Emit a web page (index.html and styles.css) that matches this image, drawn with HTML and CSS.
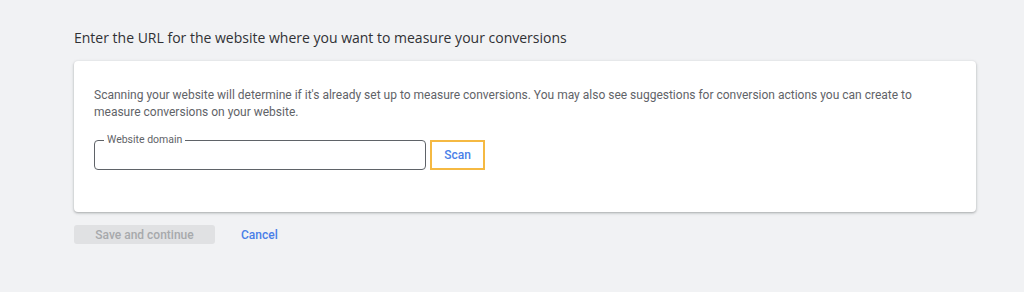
FILE: index.html
```html
<!DOCTYPE html>
<html>
<head>
    <title>Conversions</title>
    <link rel="stylesheet" href="styles.css">
</head>
<body>
    <div class="page">
        <h2 class="page-title">Enter the URL for the website where you want to measure your conversions</h2>

        <div class="scan-card">
            <p class="scan-text">
                Scanning your website will determine if it's already set up to measure conversions. You may also see suggestions for conversion actions you can create to measure conversions on your website.
            </p>
            <div class="scan-row">
                <div class="domain-field">
                    <span class="domain-label">Website domain</span>
                    <input class="domain-input" type="text">
                </div>
                <button class="scan-button">Scan</button>
            </div>
        </div>

        <div class="page-actions">
            <button class="save-button" disabled>Save and continue</button>
            <button class="cancel-button">Cancel</button>
        </div>
    </div>
</body>
</html>
```

FILE: styles.css
```css
:root {
    --page-background: #f1f2f4;
    --text-color: #3c4043;
    --muted-text: #5f6368;
    --link-color: #4a7fe8;
    --focus-color: #f5b942;
}

html, body {
    margin: 0;
    padding: 0;
    background: var(--page-background);
    font-family: Roboto, 'Liberation Sans', Arial, sans-serif;
    color: var(--text-color);
}

* {
    box-sizing: border-box;
}

.page {
    width: 902px;
    padding: 29px 0 0 74px;
    box-sizing: content-box;
}

.page-title {
    font-family: 'Open Sans', Roboto, sans-serif;
    font-size: 14px;
    font-weight: 500;
    color: #303134;
    margin: 0 0 14px 0;
    line-height: 18px;
}

.scan-card {
    width: 902px;
    background: #fff;
    border-radius: 4px;
    box-shadow: 0 1px 2px rgba(60, 64, 67, 0.3), 0 1px 3px 1px rgba(60, 64, 67, 0.1);
    padding: 26px 20px 42px 20px;
}

.scan-text {
    font-size: 12px;
    line-height: 17px;
    color: var(--muted-text);
    margin: 0 0 19px 0;
    max-width: 850px;
}

.scan-row {
    display: flex;
    align-items: center;
    gap: 4px;
}

.domain-field {
    position: relative;
    width: 332px;
    height: 30px;
}

.domain-input {
    width: 100%;
    height: 100%;
    border: 1px solid #5f6368;
    border-radius: 4px;
    outline: none;
    padding: 0 12px;
    font-family: inherit;
    font-size: 12px;
    background: transparent;
}

.domain-label {
    position: absolute;
    top: -7px;
    left: 10px;
    padding: 0 3px;
    background: #fff;
    font-size: 10.5px;
    line-height: 13px;
    color: var(--muted-text);
}

.scan-button {
    width: 55px;
    height: 30px;
    border: 2px solid var(--focus-color);
    background: #fff;
    color: var(--link-color);
    font-family: inherit;
    font-size: 12px;
    font-weight: 500;
    padding: 0;
    cursor: pointer;
}

.page-actions {
    display: flex;
    align-items: center;
    gap: 26px;
    margin-top: 13px;
}

.save-button {
    width: 141px;
    height: 19px;
    border: none;
    border-radius: 3px;
    background: #e0e1e3;
    color: #a7a9ac;
    font-family: inherit;
    font-size: 12px;
    font-weight: 500;
    padding: 0;
}

.cancel-button {
    border: none;
    background: transparent;
    color: var(--link-color);
    font-family: inherit;
    font-size: 12px;
    font-weight: 500;
    padding: 0;
    cursor: pointer;
}
```
